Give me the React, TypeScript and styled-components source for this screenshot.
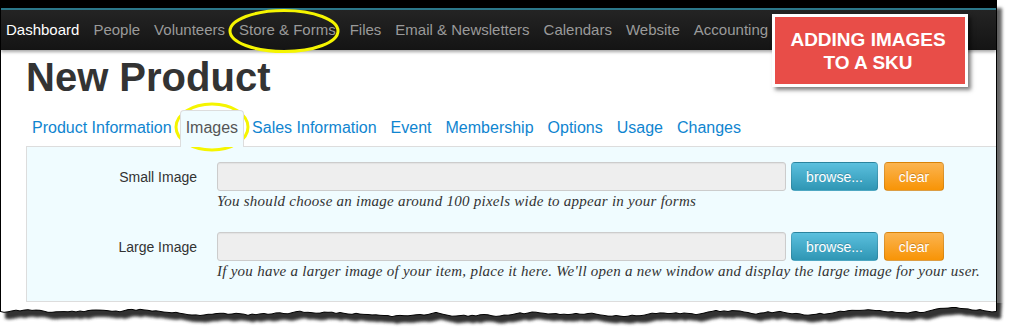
import React from 'react';
import styled, { createGlobalStyle } from 'styled-components';

const GlobalStyle = createGlobalStyle`
  html, body {
    margin: 0;
    padding: 0;
    background: #fff;
  }
  body {
    width: 1011px;
    height: 335px;
    overflow: hidden;
    font-family: "Liberation Sans", Arial, sans-serif;
  }
`;

const navItems = [
  'Dashboard',
  'People',
  'Volunteers',
  'Store & Forms',
  'Files',
  'Email & Newsletters',
  'Calendars',
  'Website',
  'Accounting',
];

const tabs = [
  'Product Information',
  'Images',
  'Sales Information',
  'Event',
  'Membership',
  'Options',
  'Usage',
  'Changes',
];

const imageFields = [
  {
    label: 'Small Image',
    help: 'You should choose an image around 100 pixels wide to appear in your forms',
  },
  {
    label: 'Large Image',
    help: "If you have a larger image of your item, place it here. We'll open a new window and display the large image for your user.",
  },
];

// jagged "torn paper" edge, deterministic
function buildEdge() {
  let seed = 11;
  const rnd = () => {
    seed = (seed * 9301 + 49297) % 233280;
    return seed / 233280;
  };
  const pts: [number, number][] = [];
  let y = 8;
  for (let x = 0; x <= 997; x += 4) {
    y += (rnd() - 0.5) * 2.4;
    y = Math.max(3, Math.min(14, y));
    pts.push([x, Math.round(y * 10) / 10]);
  }
  return pts;
}

const edge = buildEdge();
const edgeLine = edge.map(([x, y]) => `${x},${y}`).join(' ');
const edgeBack = [...edge].reverse().map(([x, y]) => `${x},${y}`).join(' ');

export default function App() {
  return (
    <Page>
      <GlobalStyle />
      <Frame>
        <TopBand />
        <NavBar>
          {navItems.map((item, i) => (
            <NavItem key={item} $active={i === 0}>{item}</NavItem>
          ))}
        </NavBar>

        <Main>
          <Title>New Product</Title>
          <TabList>
            {tabs.map(t => (
              <Tab key={t} $active={t === 'Images'}>{t}</Tab>
            ))}
          </TabList>

          <Panel>
            {imageFields.map(f => (
              <FieldRow key={f.label}>
                <Label>{f.label}</Label>
                <Controls>
                  <FileInput readOnly value="" />
                  <Button $variant="info">browse...</Button>
                  <Button $variant="warning">clear</Button>
                </Controls>
                <Help>{f.help}</Help>
              </FieldRow>
            ))}
          </Panel>
        </Main>
      </Frame>

      <TornEdge width="1011" height="32" viewBox="0 0 1011 32">
        <defs>
          <filter id="blur" x="-5%" y="-50%" width="110%" height="200%">
            <feGaussianBlur stdDeviation="1.6" />
          </filter>
        </defs>
        <rect x="0" y="0" width="1011" height="32" fill="#fff" />
        <polygon
          points={`997,-10 ${edgeBack} 0,-10`}
          transform="translate(5 7)"
          fill="#333"
          filter="url(#blur)"
        />
        <polygon points={`0,0 997,0 ${edgeBack}`} fill="#fff" />
        <polyline points={edgeLine} fill="none" stroke="#000" strokeWidth="1" />
        <line x1="0.5" y1="0" x2="0.5" y2={edge[0][1]} stroke="#000" />
        <line x1="996.5" y1="0" x2="996.5" y2={edge[edge.length - 1][1]} stroke="#000" />
      </TornEdge>

      <Callout>
        ADDING IMAGES
        <br />
        TO A SKU
      </Callout>

      <Ring width="116" height="48" viewBox="0 0 116 48" style={{ left: 226, top: 7 }}>
        <ellipse cx="58" cy="24" rx="54" ry="20.5" fill="none" stroke="#f5f500" strokeWidth="3" />
      </Ring>
      <Ring width="80" height="54" viewBox="0 0 80 54" style={{ left: 172, top: 100 }}>
        <ellipse cx="40" cy="27" rx="36" ry="23" fill="none" stroke="#f5f500" strokeWidth="3" />
      </Ring>
    </Page>
  );
}

const Page = styled.div`
  position: relative;
  width: 1011px;
  height: 335px;
  overflow: hidden;
  background: #fff;
`;

const Frame = styled.div`
  width: 997px;
  height: 303px;
  box-sizing: border-box;
  border-left: 1px solid #000;
  border-right: 1px solid #000;
  background: #fff;
  box-shadow: 5px 8px 3px rgba(0, 0, 0, 0.6);
`;

const TopBand = styled.div`
  height: 8px;
  background: #000;
  margin: 0 -1px;
`;

const NavBar = styled.div`
  height: 40px;
  border-top: 2px solid #2b7789;
  background: linear-gradient(#242424, #141414);
  box-shadow: 0 2px 3px rgba(0, 0, 0, 0.35);
  display: flex;
  align-items: center;
  gap: 14px;
  padding-left: 5px;
`;

const NavItem = styled.span<{ $active?: boolean }>`
  font-size: 15px;
  line-height: 20px;
  color: ${({ $active }) => ($active ? '#fff' : '#9a9a9a')};
  white-space: nowrap;
`;

const Main = styled.div`
  padding-left: 25px;
  padding-top: 5px;
`;

const Title = styled.h1`
  margin: 0;
  font-size: 40px;
  line-height: 44px;
  font-weight: bold;
  color: #333;
`;

const TabList = styled.div`
  display: flex;
  margin-top: 11px;
  position: relative;
  z-index: 1;
`;

const Tab = styled.div<{ $active?: boolean }>`
  font-size: 16px;
  line-height: 20px;
  padding: 7px 5px 9px;
  margin-right: 2px;
  border: 1px solid ${({ $active }) => ($active ? '#ddd' : 'transparent')};
  border-bottom: none;
  border-radius: 4px 4px 0 0;
  background: ${({ $active }) => ($active ? '#f0fcff' : 'transparent')};
  color: ${({ $active }) => ($active ? '#555' : '#0f85d0')};
  white-space: nowrap;
`;

const Panel = styled.div`
  margin-top: -1px;
  background: #f0fcff;
  border: 1px solid #ddd;
  border-right: none;
  padding: 15px 0 20px;
  display: flex;
  flex-direction: column;
  gap: 21px;
`;

const FieldRow = styled.div`
  display: grid;
  grid-template-columns: 170px auto;
  column-gap: 20px;
  align-items: center;
`;

const Label = styled.div`
  text-align: right;
  font-size: 14px;
  color: #333;
`;

const Controls = styled.div`
  display: flex;
  gap: 5px;
`;

const FileInput = styled.input`
  width: 569px;
  height: 29px;
  box-sizing: border-box;
  margin: 0;
  background: #eee;
  border: 1px solid #ccc;
  border-radius: 3px;
  box-shadow: inset 0 1px 1px rgba(0, 0, 0, 0.05);
  outline: none;
`;

const Button = styled.button<{ $variant: 'info' | 'warning' }>`
  height: 29px;
  box-sizing: border-box;
  margin: 0;
  padding: 0;
  width: ${({ $variant }) => ($variant === 'info' ? '87px' : '60px')};
  margin-left: ${({ $variant }) => ($variant === 'warning' ? '1px' : '0')};
  font-family: "Liberation Sans", Arial, sans-serif;
  font-size: 14px;
  color: #fff;
  text-shadow: 0 -1px 0 rgba(0, 0, 0, 0.2);
  border: 1px solid rgba(0, 0, 0, 0.12);
  border-radius: 4px;
  background: ${({ $variant }) =>
    $variant === 'info'
      ? 'linear-gradient(#5bc0de, #2f96b4)'
      : 'linear-gradient(#fbb450, #f89406)'};
`;

const Help = styled.div`
  grid-column: 2;
  font-family: "Liberation Serif", "Times New Roman", serif;
  font-style: italic;
  font-size: 15px;
  line-height: 20px;
  color: #333;
  letter-spacing: 0.26px;
  white-space: nowrap;
`;

const TornEdge = styled.svg`
  display: block;
`;

const Callout = styled.div`
  position: absolute;
  left: 772px;
  top: 14px;
  width: 196px;
  height: 73px;
  box-sizing: border-box;
  border: 3px solid #fff;
  background: #e84d48;
  box-shadow: 3px 3px 4px rgba(0, 0, 0, 0.5);
  display: flex;
  align-items: center;
  justify-content: center;
  text-align: center;
  color: #fff;
  font-weight: bold;
  font-size: 19px;
  line-height: 23px;
  padding-right: 4px;
`;

const Ring = styled.svg`
  position: absolute;
  pointer-events: none;
`;
